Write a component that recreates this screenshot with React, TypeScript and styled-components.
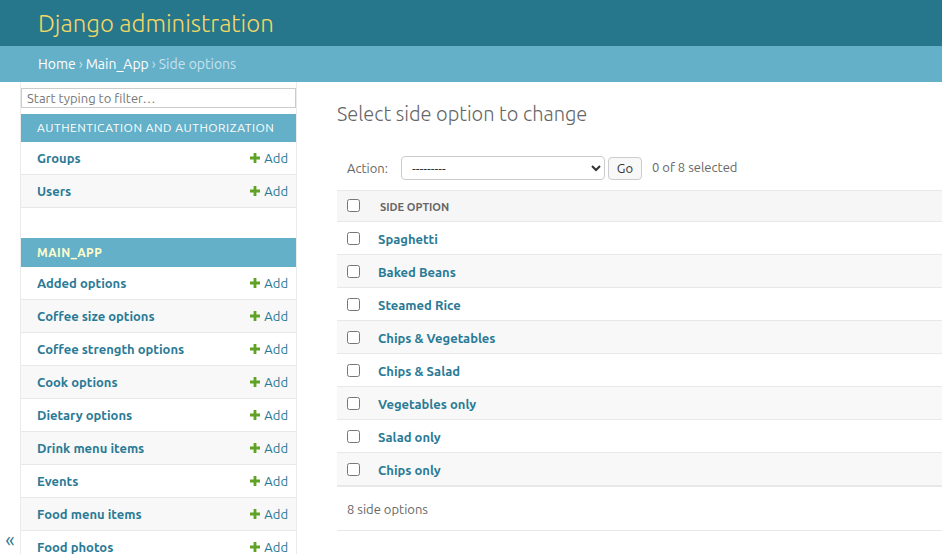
import React from "react";
import styled, { createGlobalStyle } from "styled-components";

const FONT = `"Ubuntu", "Open Sans", "DejaVu Sans", sans-serif`;

const Global = createGlobalStyle`
  html, body { margin: 0; padding: 0; }
  body {
    font-family: ${FONT};
    font-size: 14px;
    color: #333;
    background: #fff;
    overflow: hidden;
    width: 942px;
  }
  * { box-sizing: border-box; }
  a { text-decoration: none; }
`;

const Header = styled.header`
  height: 46px;
  background: #26768c;
  padding: 0 38px;
  display: flex;
  align-items: center;
`;

const Branding = styled.h1`
  margin: 0;
  font-size: 24px;
  font-weight: 300;
  color: #f2d865;
`;

const Breadcrumbs = styled.nav`
  height: 36px;
  background: #64b0c9;
  padding: 0 38px;
  display: flex;
  align-items: center;
  font-size: 14px;
  color: #c7e2ec;
`;

const Crumb = styled.a`
  color: #fff;
`;

const Sep = styled.span`
  margin: 0 3px;
  color: #c7e2ec;
`;

const Main = styled.div`
  display: flex;
  align-items: flex-start;
`;

const ToggleColumn = styled.div`
  width: 21px;
  flex: 0 0 21px;
  height: 472px;
  border-right: 1px solid #eaeaea;
  display: flex;
  align-items: flex-end;
  justify-content: center;
`;

const ToggleButton = styled.button`
  border: 0;
  background: transparent;
  color: #2a7a96;
  font-family: ${FONT};
  font-size: 20px;
  line-height: 1;
  padding: 0 0 4px 0;
  cursor: pointer;
`;

const Sidebar = styled.nav`
  width: 276px;
  flex: 0 0 276px;
  border-right: 1px solid #eaeaea;
  padding-top: 6px;
  height: 472px;
  overflow: hidden;
`;

const FilterInput = styled.input`
  display: block;
  width: 275px;
  height: 20px;
  margin: 0 0 6px 0;
  border: 1px solid #ccc;
  padding: 0 5px;
  font-family: ${FONT};
  font-size: 13px;
  color: #333;
  &::placeholder { color: #777; }
`;

const Module = styled.div`
  margin-bottom: 30px;
`;

const Caption = styled.div<{ $current?: boolean }>`
  height: ${(p) => (p.$current ? 29 : 28)}px;
  background: #64b0c9;
  padding: 0 16px;
  display: flex;
  align-items: center;
  font-size: 12px;
  letter-spacing: 0.5px;
  text-transform: uppercase;
  color: ${(p) => (p.$current ? "#ffffcc" : "#fff")};
  font-weight: ${(p) => (p.$current ? 700 : 400)};
  padding-bottom: ${(p) => (p.$current ? 0 : 2)}px;
`;

const ModelRow = styled.div<{ $alt?: boolean }>`
  height: 33px;
  display: flex;
  align-items: center;
  justify-content: space-between;
  padding: 0 8px 0 16px;
  border-bottom: 1px solid #e8e8e8;
  background: ${(p) => (p.$alt ? "#f8f8f8" : "#fff")};
`;

const ModelLink = styled.a`
  font-size: 13px;
  font-weight: 700;
  color: #2a7a96;
`;

const AddLink = styled.a`
  font-size: 13px;
  color: #2a7a96;
  display: flex;
  align-items: center;
  gap: 4px;
`;

const PlusIcon = () => (
  <svg width="10" height="10" viewBox="0 0 10 10">
    <path d="M3.6 0h2.8v3.6H10v2.8H6.4V10H3.6V6.4H0V3.6h3.6z" fill="#5fa225" />
  </svg>
);

const Content = styled.main`
  flex: 1;
  padding: 20px 0 0 40px;
  min-width: 0;
`;

const Title = styled.h1`
  margin: 0 0 20px 0;
  font-size: 20px;
  font-weight: 300;
  color: #666;
  line-height: 24px;
`;

const Actions = styled.div`
  padding: 10px;
  display: flex;
  align-items: center;
  font-size: 13px;
  color: #666;
  height: 44px;
`;

const ActionLabel = styled.label`
  margin-right: 13px;
`;

const Select = styled.select`
  width: 204px;
  height: 24px;
  border: 1px solid #ccc;
  border-radius: 4px;
  background: #fff;
  font-family: ${FONT};
  font-size: 13px;
  color: #333;
  padding: 0 6px;
`;

const GoButton = styled.button`
  margin-left: 3px;
  width: 34px;
  height: 23px;
  border: 1px solid #ccc;
  border-radius: 4px;
  background: #f8f8f8;
  font-family: ${FONT};
  font-size: 13px;
  color: #333;
  padding: 0;
`;

const Counter = styled.span`
  margin-left: 10px;
  padding-bottom: 2px;
`;

const Table = styled.div`
  width: 100%;
`;

const HeadRow = styled.div`
  height: 32px;
  background: #f6f6f6;
  border-top: 1px solid #e8e8e8;
  border-bottom: 1px solid #e8e8e8;
  display: flex;
  align-items: center;
  padding-left: 10px;
  padding-top: 1px;
`;

const HeadLabel = styled.span`
  margin-left: 20px;
  font-size: 11px;
  font-weight: 700;
  color: #666;
  text-transform: uppercase;
`;

const Row = styled.div<{ $alt?: boolean; $last?: boolean }>`
  height: ${(p) => (p.$last ? 34 : 33)}px;
  display: flex;
  align-items: center;
  padding-left: 10px;
  padding-top: 2px;
  background: ${(p) => (p.$alt ? "#f8f8f8" : "#fff")};
  border-bottom: ${(p) => (p.$last ? "2px solid #e8e8e8" : "1px solid #e8e8e8")};
`;

const Check = styled.input`
  margin: 0 0 2px 0;
  width: 13px;
  height: 13px;
`;

const RowLink = styled.a`
  margin-left: 18px;
  font-size: 13px;
  font-weight: 700;
  color: #2a7a96;
`;

const Paginator = styled.div`
  height: 44px;
  display: flex;
  align-items: center;
  padding-left: 10px;
  font-size: 13px;
  color: #666;
  border-bottom: 1px solid #e8e8e8;
`;

const authModels = ["Groups", "Users"];
const appModels = [
  "Added options",
  "Coffee size options",
  "Coffee strength options",
  "Cook options",
  "Dietary options",
  "Drink menu items",
  "Events",
  "Food menu items",
  "Food photos",
];
const sideOptions = [
  "Spaghetti",
  "Baked Beans",
  "Steamed Rice",
  "Chips & Vegetables",
  "Chips & Salad",
  "Vegetables only",
  "Salad only",
  "Chips only",
];

export default function App() {
  return (
    <>
      <Global />
      <Header>
        <Branding>Django administration</Branding>
      </Header>
      <Breadcrumbs>
        <Crumb href="#">Home</Crumb>
        <Sep>›</Sep>
        <Crumb href="#">Main_App</Crumb>
        <Sep>›</Sep>
        <span>Side options</span>
      </Breadcrumbs>
      <Main>
        <ToggleColumn>
          <ToggleButton>«</ToggleButton>
        </ToggleColumn>
        <Sidebar>
          <FilterInput placeholder="Start typing to filter…" />
          <Module>
            <Caption>Authentication and Authorization</Caption>
            {authModels.map((m, i) => (
              <ModelRow key={m} $alt={i % 2 === 1}>
                <ModelLink href="#">{m}</ModelLink>
                <AddLink href="#">
                  <PlusIcon />
                  Add
                </AddLink>
              </ModelRow>
            ))}
          </Module>
          <Module>
            <Caption $current>Main_App</Caption>
            {appModels.map((m, i) => (
              <ModelRow key={m} $alt={i % 2 === 1}>
                <ModelLink href="#">{m}</ModelLink>
                <AddLink href="#">
                  <PlusIcon />
                  Add
                </AddLink>
              </ModelRow>
            ))}
          </Module>
        </Sidebar>
        <Content>
          <Title>Select side option to change</Title>
          <Actions>
            <ActionLabel>Action:</ActionLabel>
            <Select defaultValue="">
              <option value="">---------</option>
              <option value="delete">Delete selected side options</option>
            </Select>
            <GoButton>Go</GoButton>
            <Counter>0 of 8 selected</Counter>
          </Actions>
          <Table>
            <HeadRow>
              <Check type="checkbox" />
              <HeadLabel>Side option</HeadLabel>
            </HeadRow>
            {sideOptions.map((s, i) => (
              <Row key={s} $alt={i % 2 === 1} $last={i === sideOptions.length - 1}>
                <Check type="checkbox" />
                <RowLink href="#">{s}</RowLink>
              </Row>
            ))}
            <Paginator>8 side options</Paginator>
          </Table>
        </Content>
      </Main>
    </>
  );
}
